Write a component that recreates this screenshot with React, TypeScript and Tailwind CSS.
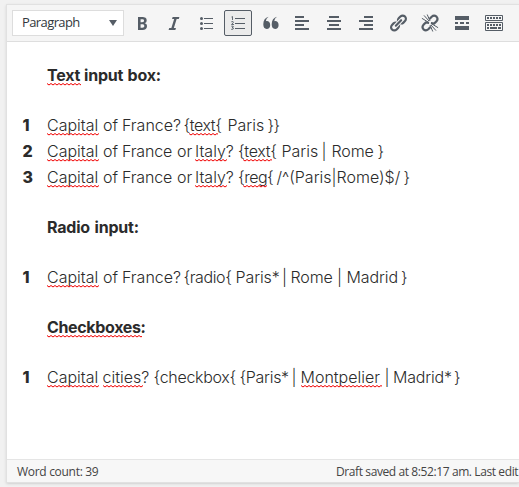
import React from "react";

type Token = { t: string; x: number; ls?: string; bad?: [number, number] };

// Each token keeps the x offset at which it starts within the writing area.
function Line({ tokens, bold }: { tokens: Token[]; bold?: boolean }) {
  return (
    <div className={bold ? "flex whitespace-pre font-bold" : "flex whitespace-pre font-light"}>
      {tokens.map((k, i) => (
        <span
          key={i}
          className="relative block shrink-0"
          style={{
            width: i + 1 < tokens.length ? tokens[i + 1].x - k.x : undefined,
            letterSpacing: k.ls ?? (bold ? "-0.2px" : undefined),
          }}
        >
          {k.t}
          {k.bad && (
            <svg className="absolute top-[21px] h-[3px]" style={{ left: k.bad[0], width: k.bad[1] }} aria-hidden="true">
              <rect width="100%" height="3" fill="url(#wave)" />
            </svg>
          )}
        </span>
      ))}
    </div>
  );
}

const capital: Token = { t: "Capital", x: 0, bad: [0, 52] };
const of: Token = { t: "of", x: 56 };

function Item({ n, tokens }: { n: number; tokens: Token[] }) {
  return (
    <li className="flex h-[26px]">
      <span className="w-[25px] shrink-0 pl-[0.5px] font-extrabold">{n}</span>
      <Line tokens={tokens} />
    </li>
  );
}

function Heading({ tokens }: { tokens: Token[] }) {
  return (
    <div className="h-[26px] pl-[25px]">
      <Line tokens={tokens} bold />
    </div>
  );
}

function Bars({ d }: { d: string }) {
  return (
    <svg width="16" height="16" className="shrink-0" stroke="#555d66" strokeWidth="2" fill="none">
      <path d={d} />
    </svg>
  );
}

function Toolbar() {
  return (
    <div className="flex h-[37px] shrink-0 items-center border-b border-[#dedede] bg-[#f5f5f5] pl-[5px]">
      <div className="flex h-[26px] w-[112px] shrink-0 items-center justify-between border border-[#ddd] bg-white pr-[6px] pl-[9px] text-[13px] text-[#32373c]">
        <span className="tracking-[-0.6px]">Paragraph</span>
        <svg width="8" height="6"><path d="M0 0h8L4 6z" fill="#555d66" /></svg>
      </div>
      <svg width="20" height="20" viewBox="0 0 20 20" className="ml-[8px] shrink-0" fill="#555d66">
        <path d="M6 4v13h4.54c1.37 0 2.46-.33 3.26-1 .8-.66 1.2-1.58 1.2-2.77 0-.84-.17-1.51-.51-2.01s-.9-.85-1.67-1.03v-.09c.57-.1 1.02-.4 1.36-.9s.51-1.13.51-1.91c0-1.14-.39-1.98-1.17-2.5C12.75 4.26 11.5 4 9.78 4H6zm2.57 5.15V6.26h1.36c.73 0 1.27.11 1.61.32.34.22.51.58.51 1.07 0 .54-.16.92-.47 1.15s-.82.35-1.51.35h-1.5zm0 2.19h1.6c1.44 0 2.16.53 2.16 1.61 0 .6-.17 1.05-.51 1.34s-.86.43-1.57.43H8.57v-3.38z" />
      </svg>
      <svg width="20" height="20" viewBox="0 0 20 20" className="ml-[12px] shrink-0" fill="#555d66">
        <path d="M14.78 6h-2.13l-2.8 9h2.12l-.62 2H4.6l.62-2h2.14l2.8-9H8.03l.62-2h6.75z" />
      </svg>
      <svg width="14" height="14" className="ml-[16px] shrink-0" fill="#555d66">
        <path d="M4 2h9v1H4zM4 7h9v1H4zM4 12h9v1H4z" />
        <circle cx="1.5" cy="2.5" r="1.5" /><circle cx="1.5" cy="7.5" r="1.5" /><circle cx="1.5" cy="12.5" r="1.5" />
      </svg>
      <div className="ml-[10px] flex h-[26px] w-[28px] shrink-0 items-center justify-center rounded-[2px] border border-[#555d66] bg-[#ebebeb]">
        <svg width="14" height="14" fill="none" stroke="#555d66">
          <path d="M4 2.5h10M4 7.5h10M4 12.5h10" />
          <path strokeWidth=".9" d="M.5 1L1.5.5V4M.3 5.8Q2.8 5 2.4 6.5L.5 8.5H3M.3 10.2Q2.7 9.8 2.4 11L1 11.7Q3 11.8 2.3 13Q1.5 13.8.2 13.3" />
        </svg>
      </div>
      <svg width="16" height="14" viewBox="0 0 16 14" className="ml-[11px] shrink-0" fill="#555d66">
        <path d="M5.6.7Q2.8 2.3 2.9 5.3C5 4.5 7.2 6.3 7.2 8.9 7.2 11.3 5.7 13 3.7 13 1.5 13 .3 11.1.3 8.3.3 4 2.2 1.5 5.6.7zM14 .7Q11.2 2.3 11.3 5.3C13.4 4.5 15.6 6.3 15.6 8.9 15.6 11.3 14.1 13 12.1 13 9.9 13 8.7 11.1 8.7 8.3 8.7 4 10.6 1.5 14 .7z" />
      </svg>
      <div className="ml-[15px] flex shrink-0 gap-[16px]">
        <Bars d="M1 2h9M1 6h14M1 10h9M1 14h14" />
        <Bars d="M3 2h10M1 6h14M3 10h10M1 14h14" />
        <Bars d="M6 2h9M1 6h14M6 10h9M1 14h14" />
      </div>
      <svg width="20" height="20" viewBox="0 0 20 20" className="ml-[14px] shrink-0" fill="#555d66">
        <path d="M17.74 2.76c1.68 1.69 1.68 4.41 0 6.1l-1.53 1.52c-1.12 1.12-2.7 1.47-4.14 1.09l2.62-2.61.76-.77.76-.76c.84-.84.84-2.2 0-3.04-.84-.85-2.2-.85-3.04 0l-.77.76-3.38 3.38c-.37-1.44-.02-3.02 1.1-4.14l1.52-1.53c1.69-1.68 4.42-1.68 6.1 0zM8.59 13.43l5.34-5.34c.42-.42.42-1.1 0-1.52-.44-.43-1.13-.39-1.53 0l-5.33 5.34c-.42.42-.42 1.1 0 1.52.44.43 1.13.39 1.52 0zm-.76 2.29l4.14-4.15c.38 1.44.03 3.02-1.09 4.14l-1.52 1.53c-1.69 1.68-4.41 1.68-6.1 0-1.68-1.68-1.68-4.42 0-6.1l1.53-1.52c1.12-1.12 2.7-1.47 4.14-1.1l-4.14 4.15c-.85.84-.85 2.2 0 3.05.84.84 2.2.84 3.04 0z" />
      </svg>
      <svg width="20" height="20" viewBox="0 0 20 20" className="ml-[12px] shrink-0" fill="none" stroke="#555d66">
        <path strokeWidth="2.2" d="M9.5 6l2.2-2.3Q14 1.6 16.5 3.6 18.6 6 16.3 8.4l-2.2 2.2-3.2-.4M10.5 14l-2.2 2.3Q6 18.4 3.5 16.4 1.4 14 3.7 11.6l2.2-2.2 3.2.4" />
        <path strokeWidth="1" d="M1.9 5.3L8 9M4 2.4L9 8M7.2 1.5L10 8M18.1 14.7L12 11M16 17.6L11 12M12.8 18.5L10 12" />
      </svg>
      <svg width="14" height="14" className="ml-[15px] shrink-0" fill="#555d66">
        <path d="M0 0h14v4H0zM0 6h3v2H0zM5 6h4v2H5zM11 6h3v2h-3zM0 10h14v4H0z" />
      </svg>
      <svg width="18" height="16" className="ml-[16px] shrink-0" fill="none" stroke="#555d66">
        <path d="M.5.5h17v5H.5zM.5 7.5h17v8H.5z" />
        <path strokeWidth="2" strokeDasharray="2 1" d="M2 3h14M2 10h14" />
        <path strokeWidth="2" d="M2 13h2M5 13h7M13 13h3" />
      </svg>
    </div>
  );
}

export default function App() {
  return (
    <div className="h-[487px] w-[519px] overflow-hidden bg-[#f1f1f1] pt-[4px] pl-[6px] font-['Open_Sans','Noto_Sans',sans-serif]">
      <svg className="absolute h-0 w-0" aria-hidden="true">
        <defs>
          <pattern id="wave" width="4" height="3" patternUnits="userSpaceOnUse">
            <path d="M-1 1L0 .5L2 2L4 .5L5 1" fill="none" stroke="#f00000" strokeWidth="1" />
          </pattern>
        </defs>
      </svg>
      <div className="flex h-[479px] w-[513px] flex-col border border-r-0 border-[#e1e1e1] bg-white shadow-sm">
        <Toolbar />
        <main className="h-[417px] shrink-0 pt-[20px] pl-[15px] font-[Inter,sans-serif] text-[16px] leading-[26px] text-[#2b2b2b]">
          <Heading tokens={[{ t: "Text", x: 0.5, bad: [0, 34] }, { t: "input", x: 37.5 }, { t: "box:", x: 81 }]} />
          <ol className="mt-[24px]">
            <Item n={1} tokens={[capital, of, { t: "France?", x: 75 }, { t: "{text{", x: 136.5, ls: "-0.4px", bad: [5, 29] }, { t: "Paris", x: 180.5 }, { t: "}}", x: 220.5, ls: "-0.7px" }]} />
            <Item n={2} tokens={[capital, of, { t: "France", x: 75, ls: "-0.15px" }, { t: "or", x: 130 }, { t: "Italy?", x: 148, bad: [0, 32] }, { t: "{text{", x: 191, ls: "-0.3px", bad: [5, 29] }, { t: "Paris", x: 234.5 }, { t: "|", x: 274.5 }, { t: "Rome", x: 284.5, ls: "-0.1px" }, { t: "}", x: 330.5 }]} />
            <Item n={3} tokens={[capital, of, { t: "France", x: 75, ls: "-0.15px" }, { t: "or", x: 130 }, { t: "Italy?", x: 148, bad: [0, 32] }, { t: "{reg{", x: 191, ls: "-0.5px", bad: [5, 24] }, { t: "/^(Paris|Rome)$/", x: 229.5 }, { t: "}", x: 356.5 }]} />
          </ol>
          <div className="mt-[24px]"><Heading tokens={[{ t: "Radio", x: 0 }, { t: "input:", x: 47.5 }]} /></div>
          <ol className="mt-[24px]">
            <Item n={1} tokens={[capital, of, { t: "France?", x: 75 }, { t: "{radio{", x: 136.5, ls: "-0.4px" }, { t: "Paris*", x: 188.5, ls: "-0.1px" }, { t: "|", x: 235 }, { t: "Rome", x: 243.5, ls: "-0.1px" }, { t: "|", x: 290 }, { t: "Madrid", x: 299.5, ls: "-0.1px" }, { t: "}", x: 354 }]} />
          </ol>
          <div className="mt-[24px]"><Heading tokens={[{ t: "Checkboxes:", x: 0, ls: "-0.35px", bad: [0, 95] }]} /></div>
          <ol className="mt-[24px]">
            <Item n={1} tokens={[capital, { t: "cities?", x: 55.5, bad: [0, 40] }, { t: "{checkbox{", x: 106.5, ls: "-0.3px" }, { t: "{Paris*", x: 192.5, ls: "-0.3px" }, { t: "|", x: 244.5 }, { t: "Montpelier", x: 253.5, bad: [0, 81] }, { t: "|", x: 337.5 }, { t: "Madrid*", x: 346, ls: "-0.2px" }, { t: "}", x: 407 }]} />
          </ol>
        </main>
        <footer className="flex h-[23px] shrink-0 items-center justify-between border-t border-[#e5e5e5] bg-[#f7f7f7] pt-[2px] pl-[10px] text-[12px] whitespace-nowrap text-[#444]">
          <span className="tracking-[-0.3px]">Word count: 39</span>
          <span className="w-[183px] tracking-[-0.4px]">Draft saved at 8:52:17 am. Last edit</span>
        </footer>
      </div>
    </div>
  );
}
